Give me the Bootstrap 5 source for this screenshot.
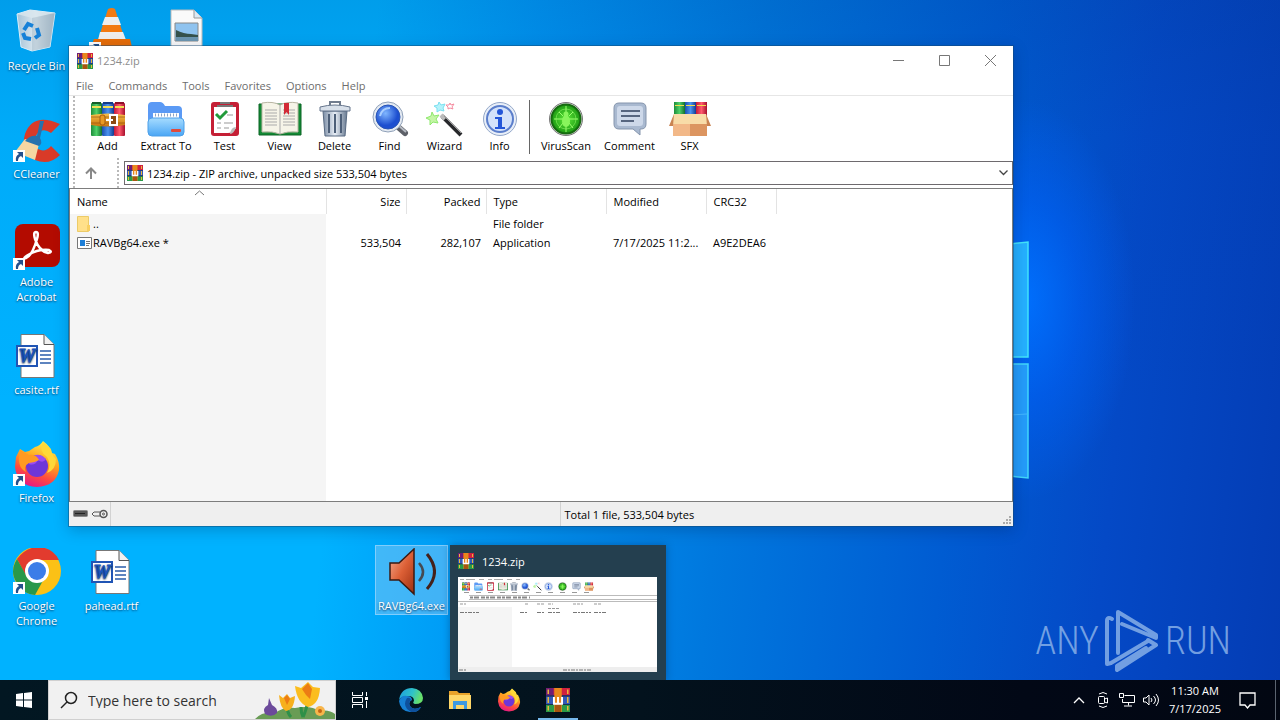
<!DOCTYPE html>
<html lang="en">
<head>
<meta charset="utf-8">
<meta name="viewport" content="width=device-width, initial-scale=1">
<title>1234.zip</title>
<link href="https://cdn.jsdelivr.net/npm/bootstrap@5.3.0/dist/css/bootstrap.min.css" rel="stylesheet">
<style>
  body { font-family: "Open Sans", "Noto Sans", sans-serif; font-size: 11px; line-height: 15px; color: #000; background: #00adff; }
  svg { display: block; flex: none; }
  button { font: inherit; color: inherit; background: none; border: 0; padding: 0; }

  .desktop { min-height: 640px;
    background:
      radial-gradient(ellipse 110px 200px at 1025px 300px, rgba(0,112,255,.95), rgba(0,100,255,.5) 50%, rgba(0,90,240,0) 100%),
      linear-gradient(180deg, rgba(0,50,130,.16) 0, rgba(0,60,150,.06) 20%, rgba(0,90,200,0) 60%),
      linear-gradient(96deg, #00b2ff 0, #00b2ff 28%, #0098f4 40%, #0078de 57%, #005cd2 74%, #0449c6 86%, #043cb4 100%); }
  .pane-art { position: absolute; left: 1010px; top: 240px; }
  .icon-grid { display: grid; grid-template-columns: repeat(auto-fill, 75px); grid-auto-rows: 108px; }
  .desk-icon { width: 73px; margin-top: 5px; padding: 3px 0 0; color: #fff; text-decoration: none; text-align: center; text-shadow: 0 1px 2px rgba(0,30,70,.8); align-self: start; border: 0; }
  .desk-icon svg { margin: 0 auto 2px; }
  .desk-icon.chosen { background: rgba(130,200,245,.5); outline: 1px solid rgba(170,220,255,.6); outline-offset: -1px; padding-bottom: 2px; }

  .app-window { position: absolute; left: 69px; top: 46px; width: 944px; max-width: calc(100% - 69px); background: #fff; box-shadow: 0 0 0 1px rgba(20,70,110,.45), 0 4px 14px rgba(0,20,60,.25); }
  .title-row { height: 29px; color: #8d8d8d; padding-left: 8px; }
  .caption-btn { width: 46px; height: 29px; }
  .menu-row { height: 20px; color: #6d6d6d; gap: 1px; }
  .menu-row button { padding: 0 7px; }
  .tool-row { height: 63px; border-top: 1px solid #e6e6e6; }
  .grip { width: 3px; border-left: 2px dotted #b9b9b9; }
  .tool-btn { min-width: 55px; text-align: center; }
  .tool-btn.wide { min-width: 62px; }
  .tool-btn.wide + .tool-btn.wide { min-width: 65px; }
  .tool-btn svg { margin: 0 auto 1px; }
  .tool-rule { width: 1px; height: 54px; background: #666; margin: 4px 5px 0 2px; }
  .path-row { height: 30px; }
  .up-btn { width: 30px; margin-right: 11px; }
  .path-box { height: 24px; border: 1px solid #6e6a6e; margin: 3px 0 0 4px; padding: 0 4px 0 2px; }
  .path-box input { border: 0; outline: 0; padding: 0; font: inherit; background: none; min-width: 0; }
  .list-area { height: 314px; border: 1px solid #7d7d7d; background: linear-gradient(#f5f5f5, #f5f5f5) 0 25px / 256px 100% no-repeat #fff; }
  .file-table { table-layout: fixed; width: 706px; border-collapse: collapse; }
  .file-table th { font-weight: 400; height: 25px; padding: 0 7px; border-right: 1px solid #e3e3e3; }
  .file-table td { height: 19px; padding: 0 7px; white-space: nowrap; }
  .file-table .num { text-align: right; padding: 0 5px; }
  .sort-mark { position: absolute; left: 124px; top: 0; }
  .state-row { height: 24px; background: #efefef; }
  .state-keys { width: 42px; padding-left: 4px; border-right: 1px solid #d2d2d2; }
  .state-cell { border-right: 1px solid #d2d2d2; }

  .peek { position: absolute; left: 450px; bottom: 0; width: 216px; height: 135px; background: #243f4f; color: #fff; box-shadow: 0 0 8px rgba(0,40,90,.4); }
  .brand { position: absolute; right: 49px; bottom: 8px; gap: 6px; color: #7fa9e6; font: 300 38px/62px "Roboto Condensed", "Open Sans Condensed", Roboto, sans-serif; opacity: .9; }

  .taskbar { height: 40px; background: linear-gradient(90deg, #021722, #03121d 50%, #020816 80%, #020712); color: #fff; }
  .search-box { width: 288px; height: 40px; background: #f1f1f1; border: 1px solid #d0d0d0; overflow: hidden; }
  .search-box input { font: inherit; font-size: 14px; border: 0; outline: 0; background: none; padding: 0; min-width: 0; }
  .search-box input::placeholder { color: #333; opacity: 1; }
  .task-btn { width: 48px; height: 40px; display: grid; place-items: center; }
  .task-list { padding-left: 2px; }
  .task-app { width: 49px; }
  .task-app.open { background: linear-gradient(#76b9ed, #76b9ed) center bottom / 40px 2px no-repeat; }
  .tray-btn { width: 24px; height: 40px; display: grid; place-items: center; }
  .clock { width: 64px; line-height: 18px; text-align: center; }
  .show-desk { width: 5px; border-left: 1px solid #5b6470; height: 40px; }
</style>
</head>
<body>
<svg width="0" height="0" class="position-absolute" aria-hidden="true">
  <defs>
    <linearGradient id="gGreen"><stop offset="0" stop-color="#1d8c3a"/><stop offset=".5" stop-color="#4fd06a"/><stop offset="1" stop-color="#14702c"/></linearGradient>
    <linearGradient id="gBlue"><stop offset="0" stop-color="#1b4fae"/><stop offset=".5" stop-color="#4b93ef"/><stop offset="1" stop-color="#123c90"/></linearGradient>
    <linearGradient id="gRed"><stop offset="0" stop-color="#c2183a"/><stop offset=".5" stop-color="#ff5a6e"/><stop offset="1" stop-color="#a50f2c"/></linearGradient>
    <linearGradient id="gGold" x2="0" y2="1"><stop offset="0" stop-color="#f8c04a"/><stop offset="1" stop-color="#c9740e"/></linearGradient>
    <linearGradient id="gFold" x2="0" y2="1"><stop offset="0" stop-color="#a6dcff"/><stop offset="1" stop-color="#4aa6f5"/></linearGradient>
    <linearGradient id="gSteel"><stop offset="0" stop-color="#7c8ea6"/><stop offset=".5" stop-color="#e8eef6"/><stop offset="1" stop-color="#66788f"/></linearGradient>
    <linearGradient id="gFire" x1=".7" y1="0" x2=".3" y2="1"><stop offset="0" stop-color="#fff14f"/><stop offset=".4" stop-color="#ffa61f"/><stop offset=".7" stop-color="#ff4b3e"/><stop offset="1" stop-color="#e3158a"/></linearGradient>
    <radialGradient id="gLens" cx=".4" cy=".35"><stop offset="0" stop-color="#7fb6ff"/><stop offset="1" stop-color="#1d4fd0"/></radialGradient>
    <radialGradient id="gScan"><stop offset="0" stop-color="#5fe83a"/><stop offset="1" stop-color="#1c9a12"/></radialGradient>
    <linearGradient id="gBin"><stop offset="0" stop-color="#a5c3d8"/><stop offset=".5" stop-color="#dfe9ef"/><stop offset="1" stop-color="#9fb3c2"/></linearGradient>
    <linearGradient id="gEdge" x2="1" y2=".3"><stop offset="0" stop-color="#1c9de0"/><stop offset=".6" stop-color="#2fc2c9"/><stop offset="1" stop-color="#67e06b"/></linearGradient>
    <linearGradient id="gHorn" x2="1" y2="1"><stop offset="0" stop-color="#f7b195"/><stop offset=".5" stop-color="#dd6036"/><stop offset="1" stop-color="#9c2f12"/></linearGradient>

    <symbol id="books" viewBox="0 0 16 16">
      <path fill="#d0213f" d="M0 0h16v5H0z"/><path fill="#6f1d74" d="M0 0h5v5H0z"/><path fill="#3158b8" d="M0 5h16v6H0z"/><path fill="#2a9a48" d="M0 11h16v5H0z"/>
      <path fill="#e8b83a" d="M1 1h1v3H1zM1 6h1v4H1zM1 12h1v3H1zM14 1h1v3h-1zM14 6h1v4h-1zM14 12h1v3h-1z"/>
      <path fill="#18224a" d="M0 5h16v.6H0zM0 10.6h16v.6H0z"/>
      <path fill="#e8881c" d="M5.500 0h5v16h-5z"/><path fill="#a85410" d="M6 11h4v5H6z"/>
      <path fill="none" stroke="#fff" stroke-width="1.300" d="M5.300 6v4.500h5.400V6M8 6v4"/>
    </symbol>
    <symbol id="books-up" viewBox="0 0 34 34">
      <rect x="0" y="1" width="11" height="33" rx="1" fill="url(#gGreen)"/><rect x="11" y="1" width="12" height="33" rx="1" fill="url(#gBlue)"/><rect x="23" y="1" width="11" height="33" rx="1" fill="url(#gRed)"/>
      <path fill="#145e28" d="M1 0h9v2H1z"/><path fill="#153b86" d="M12 0h10v2H12z"/><path fill="#8f1028" d="M24 0h9v2h-9z"/>
      <path fill="#f2df52" d="M1 4h9v2H1zM12 4h10v2H12zM24 4h9v2h-9z"/>
      <path fill="url(#gGold)" d="M0 13q17-3 34 0v10q-17 3-34 0z"/>
      <path fill="none" stroke="#8b480a" d="M0 15h34M0 21h34" opacity=".6"/>
      <rect x="9" y="13" width="5" height="10" rx="2" fill="#e89a24" stroke="#a85d0c"/>
      <rect x="19" y="13" width="7" height="10" fill="#8c4a10" stroke="#fff" stroke-width="2"/><path fill="#fff" d="M15 17h7v2h-7z"/>
    </symbol>
    <symbol id="shortcut" viewBox="0 0 12 12"><path fill="#fff" d="M0 0h12v12H0z"/><path fill="#25508c" d="M4 2h6v6L8 6Q5 7 5 11H3Q2 6 6 4z"/></symbol>
    <symbol id="wordfile" viewBox="0 0 48 48">
      <path fill="#fff" stroke="#777" d="M8 2.500h23l10 10v33H8z"/><path fill="#f1f1f1" stroke="#555" d="M31 2.500v10h10"/>
      <path stroke="#2a5caa" stroke-width="1.500" d="M27 19h11M27 23h11M27 27h11M27 31h11"/>
      <path fill="#fff" stroke="#2055b5" stroke-width="2" d="M4 14h20v20H4z"/>
      <text x="14" y="30" text-anchor="middle" font-family="Liberation Serif, serif" font-weight="700" font-style="italic" font-size="19" fill="#1d55bb" stroke="#1d55bb">W</text>
    </symbol>
    <symbol id="fox" viewBox="0 0 48 48">
      <path fill="url(#gFire)" d="M3 17 7 9l5 3 4-1 6-4q5-1 8-6 8 6 9 12l3 1q5 8 4 16Q43 46 24 47 4 46 2 27z"/>
      <circle cx="24" cy="26" r="11" fill="#6e36d8"/><path fill="#9c4cf0" d="M16 20q8-10 17-1-3 5-8 1-3 6-9 4z"/>
      <path fill="#ff9a22" d="m7 10 9 5q7-1 10 5-5 3-10 3-6 3-3 9Q3 27 7 10z"/>
      <path fill="#ffd838" d="M30 2q-5 9 4 15 5 8 0 16 9-3 9-14Q38 14 38 9z"/>
    </symbol>
    <symbol id="folder-blue" viewBox="0 0 38 36">
      <path fill="#5b9af5" d="M1 5q0-4 4-4h8q3 0 5 4h13q4 0 4 4v20H1z"/><path fill="#fff" d="M6 12h26v10H6z"/><path stroke="#8ba4c6" stroke-dasharray="1 2" stroke-width="3" d="M8 14h22"/>
      <path fill="url(#gFold)" stroke="#4d9fe8" d="M1 21q0-4 4-4h28q4 0 4 4v10q0 4-4 4H5q-4 0-4-4z"/><rect x="24" y="28" width="10" height="3" rx="1" fill="#e04a3c"/>
    </symbol>
    <symbol id="checklist" viewBox="0 0 30 36">
      <rect x="1" y="1" width="28" height="34" rx="3" fill="#c51f35"/><path fill="#fff" d="M4 6h22v21q-3 5-8 5H4z"/><path fill="#bbb" d="M26 26q-5 0-6 7 4 0 6-7z"/>
      <path fill="none" stroke="#777" stroke-width="2" d="M7 5h16M10 2h10"/><path fill="none" stroke="#229a3a" stroke-width="3" d="m6 13 4 4 7-7"/><path stroke="#999" d="M17 14h6M7 22h4M14 22h9M7 27h4M14 27h5"/>
    </symbol>
    <symbol id="openbook" viewBox="0 0 44 36">
      <path fill="#128a35" stroke="#0b6425" d="M1 3h42v31H1z"/><path fill="#f6f4e8" stroke="#b9b6a4" d="M4 2q11-2 18 2 7-4 18-2v29q-11-1-18 2-7-3-18-2z"/>
      <path stroke="#aaa" fill="none" d="M22 4v29M7 9h12M7 12h12M7 15h12M7 18h12M7 21h12M7 24h12M25 9h12M25 12h12M25 15h12M25 18h12M25 21h12M25 24h12"/><path fill="#d22a36" d="M26 2h5v12l-2.500-3-2.500 3z"/>
    </symbol>
    <symbol id="bin" viewBox="0 0 32 36">
      <path fill="url(#gSteel)" stroke="#586a82" d="M4 10h24l-2 25H6z"/><path stroke="#4d5f78" stroke-width="2" d="M10 13v19M16 13v19M22 13v19"/><path fill="#d8e0ea" stroke="#65758c" d="M1 6q15-4 30 0v4H1z"/><path fill="none" stroke="#707c8e" stroke-width="2" d="M11 4V1h10v3"/>
    </symbol>
    <symbol id="finder" viewBox="0 0 38 36">
      <path stroke="#5d6068" stroke-width="6" stroke-linecap="round" d="m26 25 8 7"/><path stroke="#b5bac2" stroke-width="2" d="m27 24 8 7"/><circle cx="17" cy="16" r="15" fill="#e4eaf2" stroke="#8fa0b8"/><circle cx="17" cy="16" r="12" fill="url(#gLens)" stroke="#2854b4"/><path fill="none" stroke="#a9ceff" stroke-width="2" d="M9 15q2-8 10-8"/>
    </symbol>
    <symbol id="wand" viewBox="0 0 38 36">
      <path stroke="#27282b" stroke-width="4" d="m16 15 19 19"/><path stroke="#bbb" stroke-width="4" d="m15 14 4 4"/><path stroke="#999" d="m18 15 17 17"/>
      <path fill="#c4f6a5" stroke="#8fe86f" d="m6 11 2 4 5-1-3 4 2 4-5-1-3 3v-5l-4-2 5-2z"/><path fill="#b5f3fb" stroke="#7be0f0" d="m13 1 2 3 4-1-2 4 1 3-4-1-3 2v-4l-3-2 4-1z"/><path fill="#fff" stroke="#f58ca0" d="m24 2 1 2 3-1-2 3 1 2-3-1-2 1v-2l-2-2 3 0z"/>
    </symbol>
    <symbol id="info" viewBox="0 0 36 36">
      <circle cx="18" cy="18" r="16.500" fill="#e9eff8" stroke="#93a7c9"/><circle cx="18" cy="18" r="13" fill="#d3e2fa" stroke="#5b7ecb" stroke-width="2"/><circle cx="18" cy="11" r="3" fill="#2356d8"/><path fill="#2356d8" d="M13 16h7v10h3v2H13v-2h3v-8h-3z"/>
    </symbol>
    <symbol id="scan" viewBox="0 0 36 36">
      <circle cx="18" cy="18" r="16.500" fill="#ddd" stroke="#777"/><circle cx="18" cy="18" r="14.500" fill="url(#gScan)" stroke="#166a10" stroke-width="2"/>
      <g fill="none" stroke="#9cff70"><circle cx="18" cy="18" r="10" opacity=".5"/><path d="M6 18h24M18 5v26M11 11l4 4M25 11l-4 4M11 27l4-5M25 27l-4-5"/></g><ellipse cx="18" cy="20" rx="4" ry="6" fill="#88f55c"/><circle cx="18" cy="13" r="2.500" fill="#88f55c"/>
    </symbol>
    <symbol id="bubble" viewBox="0 0 36 36">
      <path fill="#a9b9d0" stroke="#8595ad" d="M7 2h22q5 0 5 5v16q0 5-5 5h-1v6l-7-6H7q-5 0-5-5V7q0-5 5-5z"/><rect x="5" y="5" width="26" height="20" rx="3" fill="#cdd8e9"/><path stroke="#56657f" stroke-width="2" d="M9 10h19M9 15h19M9 20h13"/>
    </symbol>
    <symbol id="sfx" viewBox="0 0 42 36">
      <rect x="5" y="1" width="11" height="20" fill="url(#gGreen)"/><rect x="16" y="1" width="11" height="20" fill="url(#gBlue)"/><rect x="27" y="1" width="11" height="20" fill="url(#gRed)"/><path fill="#f4dc4b" d="M6 4h9v1H6zM17 4h9v1h-9zM28 4h9v1h-9z"/>
      <path fill="#e5a06a" d="M4 20h34v15H4z"/><path fill="#dc9560" d="M21 20h17v15H21z"/><path fill="#f2b888" d="M4 20h17v15H4z"/><path fill="#f8dca8" d="M5 13h32l3 10H2z"/><path fill="#c98452" d="m5 13-5 12h4zM37 13l5 12h-4z"/>
    </symbol>
  </defs>
</svg>

<div class="d-flex flex-column min-vh-100">
  <main class="desktop position-relative flex-fill overflow-hidden">
    <svg class="pane-art" width="22" height="242" aria-hidden="true">
      <path fill="#25b0ff" stroke="#42e4fb" stroke-width="1.500" d="M0 4 18 2v115H0z"/><path fill="#249cfa" stroke="#42d8fb" stroke-width="1.500" d="M0 124h18v114L0 236z"/><path stroke="#45b8ff" d="m0 175 17-1"/>
    </svg>

    <nav class="icon-grid" aria-label="Desktop">
      <a href="#" class="desk-icon" style="grid-area:1/1">
        <svg width="48" height="48"><path fill="url(#gBin)" stroke="#d9eefa" d="m4 6 13-4 25 3-5 34-18 4-11-4z"/><path fill="#d8e6ee" opacity=".8" d="m4 6 15 4 23-5-25-3z"/><path fill="#9fb6c6" d="M19 10 42 5l-5 34-18 4z" opacity=".45"/><g fill="none" stroke="#1681d8" stroke-width="4"><path d="m11 22 4-6 5 2M24 20l2 7-4 3M18 31l-6-1-2-5"/></g></svg>Recycle Bin</a>
      <a href="#" class="desk-icon" style="grid-area:1/2" aria-label="VLC">
        <svg width="48" height="48"><path fill="#f27a12" d="M20 1q4-2 7 0l11 34H9z"/><path fill="#eee" d="m17 9h13l3 8H14zM12 24h23l3 8H10z"/><path fill="#e76d08" d="M6 31h36l4 16H0z"/><use href="#shortcut" y="34" x="1" width="12" height="12"/></svg></a>
      <a href="#" class="desk-icon" style="grid-area:1/3" aria-label="Picture">
        <svg width="48" height="48"><path fill="#fafafa" stroke="#bbb" d="M8 2h23l8 8v37H8z"/><path fill="#dbe9f4" stroke="#999" d="M31 2v8h8"/><path fill="#8fc3ef" stroke="#888" d="M12 15h23v18H12z"/><path fill="#36524c" d="M13 22q8 4 15 4l7 1v3H13z"/><path fill="#6b95b0" d="M13 29h22v4H13z"/></svg></a>
      <a href="#" class="desk-icon" style="grid-area:2/1">
        <svg width="48" height="48"><path fill="#d93a28" d="M47 8 38 17q-8-6-14 1-7 9 1 15 7 4 13-3l9 9Q36 50 22 44 7 35 12 18 20-4 47 8z"/><path fill="#f5d6a2" d="m12 23 14 5-4 16-20-8z"/><path fill="#2672ad" d="M27 5h4l-4 17q3 5-1 8L12 25q5-6 12-5z"/><use href="#shortcut" y="34" width="12" height="12"/></svg>CCleaner</a>
      <a href="#" class="desk-icon" style="grid-area:3/1">
        <svg width="48" height="48"><rect x="2" y="0" width="45" height="43" rx="8" fill="#b30b00"/><path fill="none" stroke="#fff" stroke-width="2.500" d="M23 8q-3 0-1 7 4 12 13 14 5-1 1-3-11-1-21 5-6 4-2 3 6-2 11-19 2-7-1-7z"/><use href="#shortcut" y="34" width="12" height="12"/></svg>Adobe Acrobat</a>
      <a href="#" class="desk-icon" style="grid-area:4/1"><svg width="48" height="48"><use href="#wordfile"/></svg>casite.rtf</a>
      <a href="#" class="desk-icon" style="grid-area:5/1"><svg width="48" height="48"><use href="#fox"/><use href="#shortcut" y="34" width="12" height="12"/></svg>Firefox</a>
      <a href="#" class="desk-icon" style="grid-area:6/1">
        <svg width="48" height="48"><circle cx="24" cy="23" r="24" fill="#fbc116"/><path fill="#e23b2e" d="M4 11Q13-1 26-1q14 1 20 13H24L13 28z"/><path fill="#29984a" d="M4 11q-8 13 0 24 6 11 18 12l10-18H14z"/><circle cx="24" cy="23" r="12" fill="#fff"/><circle cx="24" cy="23" r="9" fill="#3b7de8"/><use href="#shortcut" y="34" width="12" height="12"/></svg>Google Chrome</a>
      <a href="#" class="desk-icon" style="grid-area:6/2"><svg width="48" height="48"><use href="#wordfile"/></svg>pahead.rtf</a>
      <a href="#" class="desk-icon chosen" style="grid-area:6/6">
        <svg width="48" height="48"><path fill="url(#gHorn)" stroke="#3b1a12" stroke-width="1.500" d="M2 15h9L26 1v45L11 32H2z"/><path fill="none" stroke="#454a52" stroke-width="2.500" d="M31 15q8 9 0 18"/><path fill="none" stroke="#45211a" stroke-width="3" d="M39 6q15 18 0 35"/></svg>RAVBg64.exe</a>
    </nav>

    <section class="app-window" aria-label="1234.zip">
      <header class="title-row d-flex align-items-center">
        <svg width="16" height="16" class="me-1"><use href="#books"/></svg><span class="flex-fill">1234.zip</span>
        <button class="caption-btn d-grid" aria-label="Minimize"><svg class="m-auto" width="11" height="11"><path stroke="#777" d="M0 5.500h11"/></svg></button>
        <button class="caption-btn d-grid" aria-label="Maximize"><svg class="m-auto" width="11" height="11"><path fill="none" stroke="#777" d="M.5.500h10v10H.5z"/></svg></button>
        <button class="caption-btn d-grid" aria-label="Close"><svg class="m-auto" width="11" height="11"><path stroke="#777" d="m0 0 11 11M11 0 0 11"/></svg></button>
      </header>
      <nav class="menu-row d-flex align-items-center" aria-label="Menu">
        <button>File</button><button>Commands</button><button>Tools</button><button>Favorites</button><button>Options</button><button>Help</button>
      </nav>
      <div class="tool-row d-flex">
        <div class="grip ms-1 me-1"></div>
        <button class="tool-btn"><svg width="34" height="36"><use href="#books-up"/></svg>Add</button>
        <button class="tool-btn wide"><svg width="38" height="36"><use href="#folder-blue"/></svg>Extract To</button>
        <button class="tool-btn"><svg width="30" height="36"><use href="#checklist"/></svg>Test</button>
        <button class="tool-btn"><svg width="44" height="36"><use href="#openbook"/></svg>View</button>
        <button class="tool-btn"><svg width="32" height="36"><use href="#bin"/></svg>Delete</button>
        <button class="tool-btn"><svg width="38" height="36"><use href="#finder"/></svg>Find</button>
        <button class="tool-btn"><svg width="38" height="36"><use href="#wand"/></svg>Wizard</button>
        <button class="tool-btn"><svg width="36" height="36"><use href="#info"/></svg>Info</button>
        <div class="tool-rule"></div>
        <button class="tool-btn wide"><svg width="36" height="36"><use href="#scan"/></svg>VirusScan</button>
        <button class="tool-btn wide"><svg width="36" height="36"><use href="#bubble"/></svg>Comment</button>
        <button class="tool-btn"><svg width="42" height="36"><use href="#sfx"/></svg>SFX</button>
      </div>
      <div class="path-row d-flex">
        <div class="grip ms-1"></div>
        <button class="up-btn d-grid" aria-label="Up"><svg class="m-auto" width="12" height="12"><path fill="none" stroke="#888" stroke-width="2" d="M6 12V2M1 6.500l5-5 5 5"/></svg></button>
        <div class="grip"></div>
        <div class="path-box d-flex align-items-center flex-fill">
          <svg width="16" height="16" class="me-1"><use href="#books"/></svg>
          <input class="flex-fill" aria-label="Path" value="1234.zip - ZIP archive, unpacked size 533,504 bytes">
          <button aria-label="Show paths"><svg width="9" height="6"><path fill="none" stroke="#444" stroke-width="1.300" d="m.5.500 4 4 4-4"/></svg></button>
        </div>
      </div>
      <div class="list-area position-relative">
        <svg class="sort-mark" width="11" height="7" aria-hidden="true"><path fill="none" stroke="#777" d="m1 6 4.500-4L10 6"/></svg>
        <table class="file-table">
          <colgroup><col style="width:256px"><col style="width:80px"><col style="width:80px"><col style="width:120px"><col style="width:100px"><col style="width:70px"></colgroup>
          <thead><tr><th>Name</th><th class="num">Size</th><th class="num">Packed</th><th>Type</th><th>Modified</th><th>CRC32</th></tr></thead>
          <tbody>
            <tr><td><span class="d-flex align-items-center"><svg width="16" height="16"><path fill="#ffe08a" stroke="#eccb68" d="M.500.500h11v15h-11z"/><path fill="#f8cf62" d="M10 9h3v6h-3z"/></svg>..</span></td><td></td><td></td><td>File folder</td><td></td><td></td></tr>
            <tr><td><span class="d-flex align-items-center"><svg width="16" height="12"><path fill="#fff" stroke="#777" d="M.5.500h14v11H.5z"/><path fill="#1e7fd8" d="M3 3h5v6H3z"/><path stroke="#777" d="M9 4.500h4M9 6.500h4M9 8.500h3"/></svg>RAVBg64.exe *</span></td><td class="num">533,504</td><td class="num">282,107</td><td>Application</td><td>7/17/2025 11:2...</td><td>A9E2DEA6</td></tr>
          </tbody>
        </table>
      </div>
      <footer class="state-row d-flex position-relative">
        <div class="state-keys d-flex align-items-center gap-1">
          <svg width="15" height="8"><rect x=".5" y=".5" width="14" height="6" rx="1" fill="#555" stroke="#888"/><path stroke="#222" d="M2 3.500h10"/></svg>
          <svg width="16" height="10"><g fill="none" stroke="#555"><circle cx="11.500" cy="5" r="3.500" stroke-width="1.500"/><circle cx="11.500" cy="5" r="1"/><path d="M8 3H2L0 5l2 2h6"/></g></svg>
        </div>
        <div class="state-cell col"></div>
        <div class="col d-flex align-items-center ps-1">Total 1 file, 533,504 bytes</div>
        <svg class="position-absolute end-0 bottom-0" width="10" height="10" aria-hidden="true"><path fill="#aaa" d="M6 0h2v2H6zM3 3h2v2H3zM6 3h2v2H6zM0 6h2v2H0zM3 6h2v2H3zM6 6h2v2H6z"/></svg>
      </footer>
    </section>

    <aside class="peek p-2">
      <div class="d-flex align-items-center gap-2"><svg width="16" height="16"><use href="#books"/></svg>1234.zip</div>
      <svg class="mt-2" width="199" height="95" aria-hidden="true">
        <path fill="#fff" d="M0 0h199v96H0z"/><path fill="#f5f5f5" d="M0 30h54v60H0z"/><path fill="#eee" d="M0 90h199v6H0z"/>
        <path stroke="#aaa" stroke-dasharray="4 2 9 4 5 4" d="M2 2.500h60"/>
        <use href="#books-up" x="4" y="5" width="8" height="9"/><use href="#folder-blue" x="16" y="5" width="9" height="9"/><use href="#checklist" x="28" y="5" width="9" height="9"/><use href="#openbook" x="40" y="5" width="10" height="9"/><use href="#bin" x="52" y="5" width="8" height="9"/><use href="#finder" x="63" y="5" width="9" height="9"/><use href="#wand" x="75" y="5" width="9" height="9"/><use href="#info" x="86" y="5" width="9" height="9"/><use href="#scan" x="100" y="5" width="9" height="9"/><use href="#bubble" x="114" y="5" width="9" height="9"/><use href="#sfx" x="126" y="5" width="10" height="9"/>
        <path stroke="#999" stroke-dasharray="5 7" d="M6 15.500h130"/><path stroke="#bbb" d="M11 18.500h188M11 22.500h188M0 24.500h199"/><path stroke="#888" stroke-width="2" stroke-dasharray="3 1 5 2 4 1" d="M12 20.500h60"/>
        <path stroke="#999" stroke-dasharray="3 1" d="M2 27h6M67 27h4M79 27h8M90 27h5M115 27h10M136 27h7M90 31.500h11"/><path stroke="#777" stroke-dasharray="4 1 2 1" d="M2 35.500h19M62 35.500h8M79 35.500h8M90 35.500h13M115 35.500h18M136 35.500h12M105 93h28M1 93h8"/>
      </svg>
    </aside>

    <div class="brand d-flex align-items-center" aria-label="ANY RUN">
      <span>ANY</span>
      <svg width="54" height="62" viewBox="0 0 54 62" aria-hidden="true"><g fill="none" stroke="#7fa9e6" stroke-width="4" stroke-linejoin="round" stroke-linecap="round"><path d="M7 9Q2 6 2 11v43l4-1 37-22"/><path d="M13 43V2l38 23v3L17 14M12 60l39-25-8-5M12 60v-4l29-18"/></g></svg>
      <span>RUN</span>
    </div>
  </main>

  <footer class="taskbar d-flex align-items-center">
    <button class="task-btn" aria-label="Start"><svg width="16" height="16"><path fill="#fff" d="m0 2 7-1v6.500H0zM8 1l8-1v7.500H8zM0 8.500h7V15l-7-1zM8 8.500h8V16l-8-1z"/></svg></button>
    <label class="search-box d-flex align-items-center">
      <svg class="mx-2" width="23" height="18"><g fill="none" stroke="#222" stroke-width="1.500"><circle cx="14" cy="7" r="5.500"/><path d="m10 11-6 6"/></g></svg>
      <input class="flex-fill" type="search" placeholder="Type here to search" aria-label="Search">
      <svg width="80" height="38"><path fill="#699c55" d="M0 38q8-8 20-6 8-6 20-5 16-3 24 3 10-2 16 3v5z"/><path fill="#6c4a9b" d="m14 17 3 7q6 3 5 8-5 5-12 1-3-6 3-9z"/><path fill="none" stroke="#2f9048" stroke-width="3" d="M32 24q0 8 4 12M53 20q-2 10-5 16M46 26q0 6 2 10"/><path fill="#f7b01d" d="m24 14 4 3 4-4 3 4 5-2q-1 14-9 15-6-3-7-16z"/><path fill="#fbbd1e" d="m40 5 6 2 7-6 5 5 7 1q-1 17-12 19Q42 22 40 5z"/><path fill="#ec7c14" d="m47 8 6-6 4 6-2 10-4-4zM29 17l3-3 3 4-3 6z"/><circle cx="65" cy="30" r="5" fill="#f8b64b"/><circle cx="65" cy="30" r="2" fill="#c56713"/></svg>
    </label>
    <button class="task-btn" aria-label="Task view"><svg width="18" height="16"><g fill="none" stroke="#fff"><path d="M1.500 0v3.500h10V0M1.500 16v-3.500h10V16M1.500 5.500h10v5h-10zM15.500 0v4M15.500 9v7"/></g><path fill="#fff" d="M14 5h3v3h-3z"/></svg></button>
    <nav class="task-list d-flex me-auto" aria-label="Apps">
      <button class="task-btn task-app" aria-label="Edge"><svg width="24" height="24"><path fill="url(#gEdge)" d="M0 12Q2 0 13 0q10 1 11 10 0 6-8 6-3-1-1-3 0-5-6-5Q2 8 0 12z"/><path fill="#1680d4" d="M0 13q2-6 8-5 5 0 5 4-4 2-2 6 3 5 11 1-3 6-11 5Q1 23 0 13z"/><path fill="#0e509c" d="M8 10q-4 6 0 11l4 3q6 1 10-5-8 4-11-1-2-4 1-6-1-3-4-2z"/></svg></button>
      <button class="task-btn task-app" aria-label="File Explorer"><svg width="22" height="20"><path fill="#e9a32a" d="M0 1h8l2 2h11v5H0z"/><path fill="#ffd768" d="M0 5h22v14H0z"/><path fill="#3f9ae0" d="M4 11h14v8h-3v-4H7v4H4z"/></svg></button>
      <button class="task-btn task-app" aria-label="Firefox"><svg width="24" height="24"><use href="#fox"/></svg></button>
      <button class="task-btn task-app open" aria-label="WinRAR"><svg width="24" height="24"><use href="#books"/></svg></button>
    </nav>
    <button class="tray-btn" aria-label="Hidden icons"><svg width="12" height="8"><path fill="none" stroke="#fff" stroke-width="1.300" d="m1 7 5-5 5 5"/></svg></button>
    <button class="tray-btn" aria-label="Camera"><svg width="12" height="18"><g fill="none" stroke="#fff"><rect x="1.500" y="5.500" width="6" height="7" rx="1"/><path d="M7.500 8l3-1v5l-3-1M2 3q4-3 8 0M2 15q4 3 8 0"/></g></svg></button>
    <button class="tray-btn" aria-label="Network"><svg width="16" height="14"><g fill="none" stroke="#fff"><path d="M5.500 2.500h10v7h-12V6M.5.500h4v4h-4zM9.500 9.500v3M5 13h8"/></g></svg></button>
    <button class="tray-btn" aria-label="Volume"><svg width="18" height="14"><g fill="none" stroke="#fff"><path d="M1.500 5v4H4l3 3V2L4 5zM9 5q2 2 0 4M11.500 3q4 4 0 8M14 1q5 6 0 12"/></g></svg></button>
    <div class="clock">11:30 AM<br>7/17/2025</div>
    <button class="task-btn" aria-label="Notifications"><svg class="me-2" width="17" height="17"><path fill="none" stroke="#fff" stroke-width="1.300" d="M1 1h15v12h-5l-2.500 3L6 13H1z"/></svg></button>
    <button class="show-desk" aria-label="Show desktop"></button>
  </footer>
</div>
<script src="https://cdn.jsdelivr.net/npm/bootstrap@5.3.0/dist/js/bootstrap.bundle.min.js"></script>
</body>
</html>
